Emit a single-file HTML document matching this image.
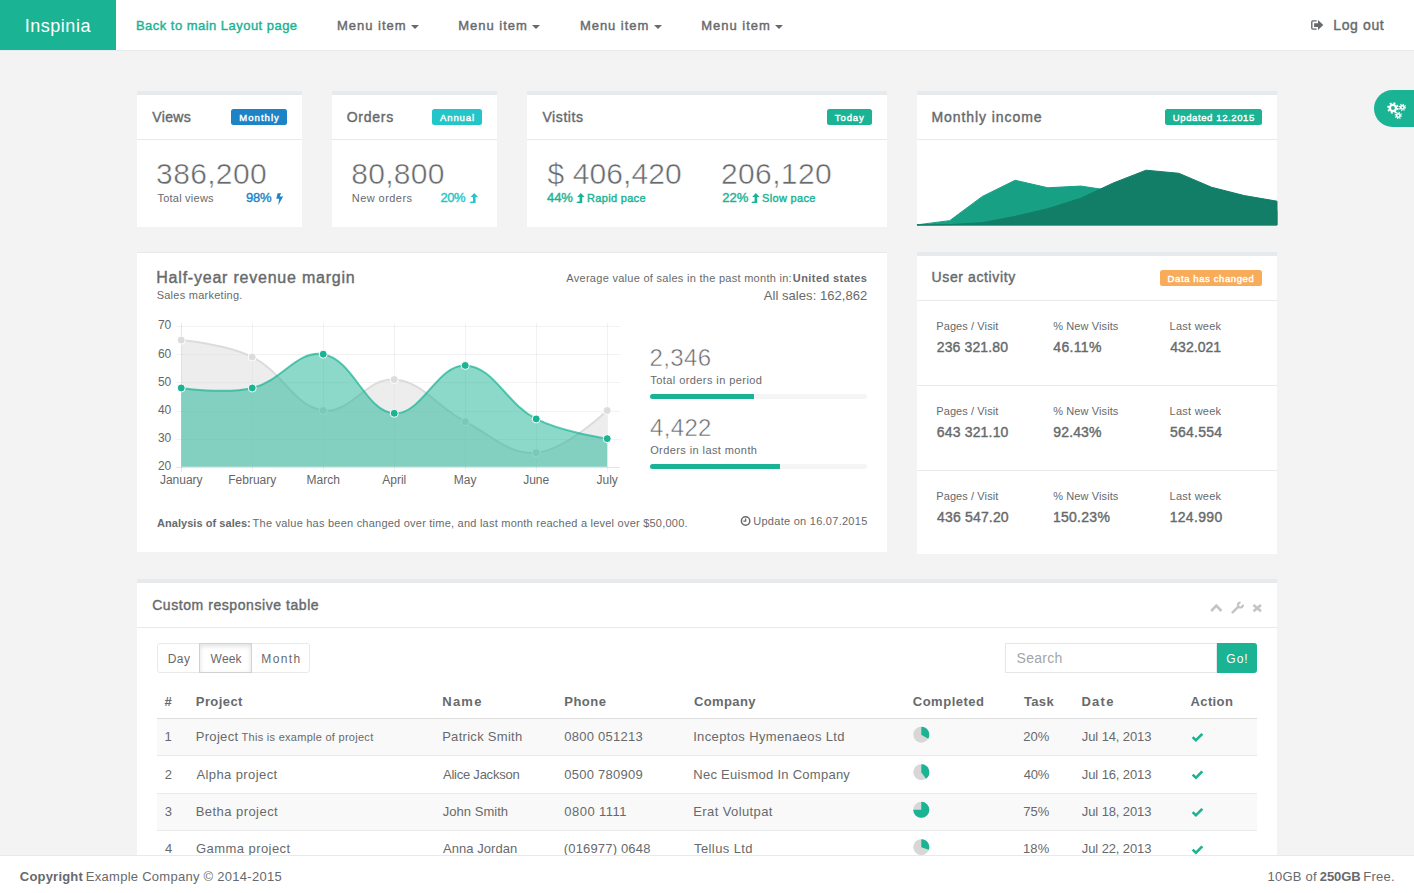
<!DOCTYPE html>
<html><head><meta charset="utf-8"><title>Inspinia</title><style>
html,body{margin:0;padding:0;}
body{width:1414px;height:893px;overflow:hidden;position:relative;background:#f3f3f4;font-family:"Liberation Sans",sans-serif;color:#676a6c;}
.r{position:absolute;}
.card{position:absolute;background:#fff;border-top:4px solid #e7eaec;box-sizing:border-box;}
.sep{position:absolute;left:0;right:0;height:1px;background:#e7eaec;}
.lbl{position:absolute;height:16px;border-radius:2.5px;}
.caret{position:absolute;top:24.5px;width:0;height:0;border-top:4px solid #676a6c;border-left:4px solid transparent;border-right:4px solid transparent;}
.prog{position:absolute;width:217px;height:5px;background:#f5f5f5;border-radius:3px;overflow:hidden;}
.prog div{height:5px;background:#1ab394;}
.ov{position:absolute;left:0;top:0;}
.t{position:absolute;white-space:nowrap;line-height:1;}
.lt{-webkit-text-stroke:0.5px #fff;}
.ft{z-index:6}
.foot{z-index:5;position:absolute;left:0;top:855px;width:1414px;height:38px;background:#fff;border-top:1px solid #e7eaec;box-sizing:border-box;}
</style></head>
<body>

<div class="r" style="left:0;top:0;width:1414px;height:50px;background:#fff;border-bottom:1px solid #e7eaec"></div>
<div class="r" style="left:0;top:0;width:116px;height:50px;background:#1ab394"></div>
<div class="caret" style="left:411px"></div>
<div class="caret" style="left:532px"></div>
<div class="caret" style="left:654px"></div>
<div class="caret" style="left:775px"></div>
<!-- row1 cards -->
<div class="card" style="left:137px;top:91px;width:165px;height:136px"><div class="sep" style="top:44px"></div></div>
<div class="card" style="left:332px;top:91px;width:165px;height:136px"><div class="sep" style="top:44px"></div></div>
<div class="card" style="left:527px;top:91px;width:360px;height:136px"><div class="sep" style="top:44px"></div></div>
<div class="card" style="left:917px;top:91px;width:360px;height:135px"><div class="sep" style="top:44px"></div></div>
<div class="lbl" style="left:231px;top:109px;width:56px;background:#1c84c6"></div>
<div class="lbl" style="left:432px;top:109px;width:50px;background:#23c6c8"></div>
<div class="lbl" style="left:827px;top:109px;width:45px;background:#1ab394"></div>
<div class="lbl" style="left:1165px;top:109px;width:97px;background:#1ab394"></div>
<!-- row2 -->
<div class="r" style="left:137px;top:252px;width:750px;height:300px;background:#fff;border-top:1px solid #e7eaec;box-sizing:border-box"></div>
<div class="card" style="left:917px;top:252px;width:360px;height:302px">
 <div class="sep" style="top:44px"></div><div class="sep" style="top:129px"></div><div class="sep" style="top:214px"></div></div>
<div class="lbl" style="left:1160px;top:270px;width:102px;background:#f8ac59"></div>
<div class="prog" style="left:650px;top:394px"><div style="width:104px"></div></div>
<div class="prog" style="left:650px;top:464px"><div style="width:130px"></div></div>
<!-- table card -->
<div class="card" style="left:137px;top:579px;width:1140px;height:320px"><div class="sep" style="top:44px"></div></div>
<div class="r" style="left:157px;top:643px;width:153px;height:30px;border:1px solid #e7eaec;border-radius:3px;box-sizing:border-box;background:#fff"></div>
<div class="r" style="left:199px;top:643px;width:53px;height:30px;border:1px solid #d2d2d2;box-sizing:border-box;background:#fff;box-shadow:inset 0 2px 5px rgba(0,0,0,.13)"></div>
<div class="r" style="left:1005px;top:643px;width:212px;height:30px;border:1px solid #e5e6e7;box-sizing:border-box;background:#fff"></div>
<div class="r" style="left:1217px;top:643px;width:40px;height:30px;border-radius:0 3px 3px 0;background:#1ab394"></div>
<div class="r" style="left:157px;top:718px;width:1100px;height:1px;background:#dddddd"></div>
<div class="r" style="left:157px;top:719px;width:1100px;height:36.5px;background:#f9f9f9"></div>
<div class="r" style="left:157px;top:755px;width:1100px;height:1px;background:#e7eaec"></div>
<div class="r" style="left:157px;top:793px;width:1100px;height:1px;background:#e7eaec"></div>
<div class="r" style="left:157px;top:794px;width:1100px;height:36.5px;background:#f9f9f9"></div>
<div class="r" style="left:157px;top:830px;width:1100px;height:1px;background:#e7eaec"></div>
<!-- settings tab -->
<div class="r" style="left:1374px;top:90px;width:40px;height:37px;background:#1ab394;border-radius:19px 0 0 19px"></div>


<svg class="ov" width="1414" height="893" viewBox="0 0 1414 893" font-family="Liberation Sans, sans-serif">
<!-- logout icon -->
<path d="M1316.6,20.9 H1312.8 Q1311.8,20.9 1311.8,21.9 V28.1 Q1311.8,29.1 1312.8,29.1 H1316.6" fill="none" stroke="#676a6c" stroke-width="1.4"/>
<path d="M1314.1,23.3 H1318 V20 L1323.3,25 L1318,30 V26.9 H1314.1 Z" fill="#676a6c"/>
<!-- bolt -->
<path d="M277.6,193.2 L281.2,193.2 L279.6,196.4 L283.1,196.4 L278.2,205.2 L279.2,198.8 L276.3,198.8 Z" fill="#1c84c6"/>
<!-- level-up icons -->
<defs><g id="lvl"><path d="M0,4 L3.6,0 L7.4,4 L5,4 L5,10 L-1,10 L0.4,8.4 L2.4,8.4 L2.4,4 Z" fill="currentColor"/></g></defs>
<use href="#lvl" x="470.6" y="193.1" style="color:#23c6c8"/>
<use href="#lvl" x="577.2" y="193.1" style="color:#1ab394"/>
<use href="#lvl" x="752.2" y="193.1" style="color:#1ab394"/>
<path d="M917.00,224.89 L949.73,220.63 L982.45,196.38 L1015.18,180.27 L1047.91,187.78 L1080.64,186.07 L1113.36,190.99 L1146.09,191.08 L1178.82,195.59 L1211.55,207.95 L1244.27,210.14 L1277.00,210.53 L1277,225.0 L917,225.0 Z" fill="#17a084" stroke="#17a084" stroke-width="1" stroke-linejoin="round"/>
<path d="M917.00,224.89 L949.73,224.62 L982.45,222.66 L1015.18,216.35 L1047.91,208.65 L1080.64,198.31 L1113.36,182.95 L1146.09,170.20 L1178.82,173.27 L1211.55,187.22 L1244.27,195.59 L1277.00,201.18 L1277,225.0 L917,225.0 Z" fill="#127e68" stroke="#127e68" stroke-width="1" stroke-linejoin="round"/>
<line x1="176.25" y1="467.50" x2="620" y2="467.50" stroke="rgba(0,0,0,.1)" stroke-width="1"/>
<text x="171.25" y="470.10" text-anchor="end" font-size="12" fill="#666">20</text>
<line x1="176.25" y1="439.50" x2="620" y2="439.50" stroke="rgba(0,0,0,.05)" stroke-width="1"/>
<text x="171.25" y="441.95" text-anchor="end" font-size="12" fill="#666">30</text>
<line x1="176.25" y1="411.50" x2="620" y2="411.50" stroke="rgba(0,0,0,.05)" stroke-width="1"/>
<text x="171.25" y="413.80" text-anchor="end" font-size="12" fill="#666">40</text>
<line x1="176.25" y1="382.50" x2="620" y2="382.50" stroke="rgba(0,0,0,.05)" stroke-width="1"/>
<text x="171.25" y="385.65" text-anchor="end" font-size="12" fill="#666">50</text>
<line x1="176.25" y1="354.50" x2="620" y2="354.50" stroke="rgba(0,0,0,.05)" stroke-width="1"/>
<text x="171.25" y="357.50" text-anchor="end" font-size="12" fill="#666">60</text>
<line x1="176.25" y1="326.50" x2="620" y2="326.50" stroke="rgba(0,0,0,.05)" stroke-width="1"/>
<text x="171.25" y="329.35" text-anchor="end" font-size="12" fill="#666">70</text>
<line x1="181.50" y1="323.05" x2="181.50" y2="471.80" stroke="rgba(0,0,0,.1)" stroke-width="1"/>
<text x="181.25" y="484" text-anchor="middle" font-size="12" fill="#666">January</text>
<line x1="252.50" y1="323.05" x2="252.50" y2="471.80" stroke="rgba(0,0,0,.05)" stroke-width="1"/>
<text x="252.24" y="484" text-anchor="middle" font-size="12" fill="#666">February</text>
<line x1="323.50" y1="323.05" x2="323.50" y2="471.80" stroke="rgba(0,0,0,.05)" stroke-width="1"/>
<text x="323.23" y="484" text-anchor="middle" font-size="12" fill="#666">March</text>
<line x1="394.50" y1="323.05" x2="394.50" y2="471.80" stroke="rgba(0,0,0,.05)" stroke-width="1"/>
<text x="394.22" y="484" text-anchor="middle" font-size="12" fill="#666">April</text>
<line x1="465.50" y1="323.05" x2="465.50" y2="471.80" stroke="rgba(0,0,0,.05)" stroke-width="1"/>
<text x="465.21" y="484" text-anchor="middle" font-size="12" fill="#666">May</text>
<line x1="536.50" y1="323.05" x2="536.50" y2="471.80" stroke="rgba(0,0,0,.05)" stroke-width="1"/>
<text x="536.20" y="484" text-anchor="middle" font-size="12" fill="#666">June</text>
<line x1="607.50" y1="323.05" x2="607.50" y2="471.80" stroke="rgba(0,0,0,.05)" stroke-width="1"/>
<text x="607.19" y="484" text-anchor="middle" font-size="12" fill="#666">July</text>
<path d="M181.25,340.12 C181.25,340.12 226.64,344.32 252.24,357.01 C283.43,372.47 292.88,405.69 323.23,410.50 C349.67,414.69 366.74,377.36 394.22,379.54 C423.53,381.86 435.90,406.65 465.21,421.76 C492.69,435.93 508.72,454.90 536.20,452.73 C565.51,450.40 607.19,410.50 607.19,410.50" fill="none" stroke="rgba(220,220,220,1)" stroke-width="2"/>
<path d="M181.25,340.12 C181.25,340.12 226.64,344.32 252.24,357.01 C283.43,372.47 292.88,405.69 323.23,410.50 C349.67,414.69 366.74,377.36 394.22,379.54 C423.53,381.86 435.90,406.65 465.21,421.76 C492.69,435.93 508.72,454.90 536.20,452.73 C565.51,450.40 607.19,410.50 607.19,410.50 L607.19,466.80 L181.25,466.80 Z" fill="rgba(220,220,220,0.5)" stroke="none"/>
<circle cx="181.25" cy="340.12" r="4" fill="rgba(220,220,220,1)" stroke="#fff" stroke-width="1"/>
<circle cx="252.24" cy="357.01" r="4" fill="rgba(220,220,220,1)" stroke="#fff" stroke-width="1"/>
<circle cx="323.23" cy="410.50" r="4" fill="rgba(220,220,220,1)" stroke="#fff" stroke-width="1"/>
<circle cx="394.22" cy="379.54" r="4" fill="rgba(220,220,220,1)" stroke="#fff" stroke-width="1"/>
<circle cx="465.21" cy="421.76" r="4" fill="rgba(220,220,220,1)" stroke="#fff" stroke-width="1"/>
<circle cx="536.20" cy="452.73" r="4" fill="rgba(220,220,220,1)" stroke="#fff" stroke-width="1"/>
<circle cx="607.19" cy="410.50" r="4" fill="rgba(220,220,220,1)" stroke="#fff" stroke-width="1"/>
<path d="M181.25,387.98 C181.25,387.98 225.29,394.39 252.24,387.98 C282.08,380.88 297.12,349.54 323.23,354.20 C353.91,359.67 364.74,410.98 394.22,413.31 C421.54,415.48 437.35,364.36 465.21,365.46 C494.14,366.61 505.15,402.94 536.20,418.94 C561.94,432.21 607.19,438.65 607.19,438.65" fill="none" stroke="rgba(26,179,148,0.7)" stroke-width="2"/>
<path d="M181.25,387.98 C181.25,387.98 225.29,394.39 252.24,387.98 C282.08,380.88 297.12,349.54 323.23,354.20 C353.91,359.67 364.74,410.98 394.22,413.31 C421.54,415.48 437.35,364.36 465.21,365.46 C494.14,366.61 505.15,402.94 536.20,418.94 C561.94,432.21 607.19,438.65 607.19,438.65 L607.19,466.80 L181.25,466.80 Z" fill="rgba(26,179,148,0.5)" stroke="none"/>
<circle cx="181.25" cy="387.98" r="4" fill="rgba(26,179,148,1)" stroke="#fff" stroke-width="1"/>
<circle cx="252.24" cy="387.98" r="4" fill="rgba(26,179,148,1)" stroke="#fff" stroke-width="1"/>
<circle cx="323.23" cy="354.20" r="4" fill="rgba(26,179,148,1)" stroke="#fff" stroke-width="1"/>
<circle cx="394.22" cy="413.31" r="4" fill="rgba(26,179,148,1)" stroke="#fff" stroke-width="1"/>
<circle cx="465.21" cy="365.46" r="4" fill="rgba(26,179,148,1)" stroke="#fff" stroke-width="1"/>
<circle cx="536.20" cy="418.94" r="4" fill="rgba(26,179,148,1)" stroke="#fff" stroke-width="1"/>
<circle cx="607.19" cy="438.65" r="4" fill="rgba(26,179,148,1)" stroke="#fff" stroke-width="1"/>
<!-- clock -->
<circle cx="745.6" cy="521" r="4.2" fill="none" stroke="#676a6c" stroke-width="1.5"/>
<path d="M745.6,518.4 v2.8 h-2.2" fill="none" stroke="#676a6c" stroke-width="1.3"/>
<!-- tools -->
<path d="M1211.2,611 L1216.3,605.6 L1221.4,611" fill="none" stroke="#c4c4c4" stroke-width="2.6"/>
<path d="M1232.6,612.4 L1238.4,606.6" stroke="#c4c4c4" stroke-width="2.4" stroke-linecap="round"/>
<path d="M1242.9,604.6 A2.5,2.5 0 1 1 1240.6,602.5" fill="none" stroke="#c4c4c4" stroke-width="2.2"/>
<path d="M1253.5,605 L1261,611.2 M1261,605 L1253.5,611.2" stroke="#c4c4c4" stroke-width="2.6"/>
<!-- pies -->
<circle cx="921.3" cy="734.7" r="8" fill="#d7d7d7"/>
<path d="M921.3,734.7 L921.3,726.7 A8,8 0 0 1 928.24,738.69 Z" fill="#1ab394"/>
<circle cx="921.3" cy="772.2" r="8" fill="#d7d7d7"/>
<path d="M921.3,772.2 L921.3,764.2 A8,8 0 0 1 926.00,778.67 Z" fill="#1ab394"/>
<circle cx="921.3" cy="809.8" r="8" fill="#d7d7d7"/>
<path d="M921.3,809.8 L921.3,801.8 A8,8 0 1 1 913.30,809.80 Z" fill="#1ab394"/>
<circle cx="921.3" cy="847.2" r="8" fill="#d7d7d7"/>
<path d="M921.3,847.2 L921.3,839.2 A8,8 0 0 1 928.91,849.67 Z" fill="#1ab394"/>
<!-- checks -->
<path transform="translate(1191.7,732.8)" d="M0,5.2 L1.9,3.4 L4.2,5.6 L9.6,0.2 L11.6,2.0 L4.2,9.3 Z" fill="#1ab394"/>
<path transform="translate(1191.7,770.3)" d="M0,5.2 L1.9,3.4 L4.2,5.6 L9.6,0.2 L11.6,2.0 L4.2,9.3 Z" fill="#1ab394"/>
<path transform="translate(1191.7,807.8)" d="M0,5.2 L1.9,3.4 L4.2,5.6 L9.6,0.2 L11.6,2.0 L4.2,9.3 Z" fill="#1ab394"/>
<path transform="translate(1191.7,845.3)" d="M0,5.2 L1.9,3.4 L4.2,5.6 L9.6,0.2 L11.6,2.0 L4.2,9.3 Z" fill="#1ab394"/>
<!-- gears -->
<g fill="#fff" stroke="none">
 <circle cx="1392.9" cy="108" r="4.3"/>
 <circle cx="1392.9" cy="108" r="4.9" fill="none" stroke="#fff" stroke-width="1.8" stroke-dasharray="1.9 1.95"/>
 <circle cx="1392.9" cy="108" r="1.9" fill="#1ab394"/>
 <circle cx="1402.4" cy="107.3" r="2.5"/>
 <circle cx="1402.4" cy="107.3" r="3.0" fill="none" stroke="#fff" stroke-width="1.3" stroke-dasharray="1.1 1.25"/>
 <circle cx="1402.4" cy="107.3" r="0.9" fill="#1ab394"/>
 <circle cx="1398.3" cy="115.5" r="2.5"/>
 <circle cx="1398.3" cy="115.5" r="3.0" fill="none" stroke="#fff" stroke-width="1.3" stroke-dasharray="1.1 1.25"/>
 <circle cx="1398.3" cy="115.5" r="0.9" fill="#1ab394"/>
</g>
</svg>

<div id="logo" class="t" style="left:24.80px;top:16.81px;font-size:18px;letter-spacing:0.508px;color:#fff;">Inspinia</div>
<div id="nav0" class="t sb" style="left:135.98px;top:18.81px;font-size:13px;-webkit-text-stroke:0.4px #1ab394;letter-spacing:0.469px;color:#1ab394;">Back to main Layout page</div>
<div id="nav1" class="t sb" style="left:336.98px;top:18.81px;font-size:13px;-webkit-text-stroke:0.4px #676a6c;letter-spacing:0.993px;">Menu item</div>
<div id="nav2" class="t sb" style="left:458.21px;top:18.81px;font-size:13px;-webkit-text-stroke:0.4px #676a6c;letter-spacing:0.986px;">Menu item</div>
<div id="nav3" class="t sb" style="left:579.98px;top:18.81px;font-size:13px;-webkit-text-stroke:0.4px #676a6c;letter-spacing:0.945px;">Menu item</div>
<div id="nav4" class="t sb" style="left:701.21px;top:18.81px;font-size:13px;-webkit-text-stroke:0.4px #676a6c;letter-spacing:0.986px;">Menu item</div>
<div id="logout" class="t sb" style="left:1333.34px;top:17.82px;font-size:14px;-webkit-text-stroke:0.4px #676a6c;letter-spacing:0.610px;">Log out</div>
<div id="t_views" class="t sb" style="left:152.22px;top:110.21px;font-size:14px;-webkit-text-stroke:0.4px #676a6c;letter-spacing:0.366px;">Views</div>
<div id="t_orders" class="t sb" style="left:346.73px;top:110.21px;font-size:14px;-webkit-text-stroke:0.4px #676a6c;letter-spacing:0.744px;">Orders</div>
<div id="t_visits" class="t sb" style="left:542.41px;top:110.21px;font-size:14px;-webkit-text-stroke:0.4px #676a6c;letter-spacing:0.595px;">Vistits</div>
<div id="t_income" class="t sb" style="left:931.49px;top:110.21px;font-size:14px;-webkit-text-stroke:0.4px #676a6c;letter-spacing:0.923px;">Monthly income</div>
<div id="l_monthly" class="t sb" style="left:239.26px;top:112.91px;font-size:9.5px;-webkit-text-stroke:0.4px #fff;letter-spacing:1.055px;color:#fff;">Monthly</div>
<div id="l_annual" class="t sb" style="left:439.98px;top:112.91px;font-size:9.5px;-webkit-text-stroke:0.4px #fff;letter-spacing:0.906px;color:#fff;">Annual</div>
<div id="l_today" class="t sb" style="left:834.85px;top:112.91px;font-size:9.5px;-webkit-text-stroke:0.4px #fff;letter-spacing:0.884px;color:#fff;">Today</div>
<div id="l_updated" class="t sb" style="left:1172.87px;top:112.91px;font-size:9.5px;-webkit-text-stroke:0.4px #fff;letter-spacing:0.604px;color:#fff;">Updated 12.2015</div>
<div id="n_views" class="t lt" style="left:156.11px;top:159.01px;font-size:30px;letter-spacing:0.343px;">386,200</div>
<div id="n_orders" class="t lt" style="left:351.35px;top:159.01px;font-size:30px;letter-spacing:0.256px;">80,800</div>
<div id="n_visits1" class="t lt" style="left:547.59px;top:158.51px;font-size:30px;letter-spacing:0.068px;">$ 406,420</div>
<div id="n_visits2" class="t lt" style="left:720.98px;top:158.51px;font-size:30px;letter-spacing:0.373px;">206,120</div>
<div id="s_views" class="t" style="left:157.40px;top:192.60px;font-size:11px;letter-spacing:0.239px;">Total views</div>
<div id="s_orders" class="t" style="left:351.75px;top:192.60px;font-size:11px;letter-spacing:0.452px;">New orders</div>
<div id="p_views" class="t sb" style="left:245.94px;top:191.00px;font-size:13px;-webkit-text-stroke:0.4px #1c84c6;letter-spacing:-0.145px;color:#1c84c6;">98%</div>
<div id="p_orders" class="t sb" style="left:440.39px;top:191.00px;font-size:13px;-webkit-text-stroke:0.4px #23c6c8;letter-spacing:-0.378px;color:#23c6c8;">20%</div>
<div id="p_v1" class="t sb" style="left:546.93px;top:191.00px;font-size:13px;-webkit-text-stroke:0.4px #1ab394;letter-spacing:-0.014px;color:#1ab394;">44%</div>
<div id="p_v1b" class="t sb" style="left:587.11px;top:193.00px;font-size:11px;-webkit-text-stroke:0.4px #1ab394;letter-spacing:0.306px;color:#1ab394;">Rapid pace</div>
<div id="p_v2" class="t sb" style="left:722.24px;top:191.00px;font-size:13px;-webkit-text-stroke:0.4px #1ab394;letter-spacing:-0.029px;color:#1ab394;">22%</div>
<div id="p_v2b" class="t sb" style="left:762.01px;top:193.00px;font-size:11px;-webkit-text-stroke:0.4px #1ab394;letter-spacing:0.332px;color:#1ab394;">Slow pace</div>
<div id="h_title" class="t sb" style="left:156.29px;top:270.00px;font-size:16px;-webkit-text-stroke:0.4px #676a6c;letter-spacing:0.780px;">Half-year revenue margin</div>
<div id="h_sub" class="t" style="left:156.63px;top:289.91px;font-size:11px;letter-spacing:0.258px;">Sales marketing.</div>
<div id="h_avg" class="t" style="left:566.31px;top:273.10px;font-size:11px;letter-spacing:0.283px;">Average value of sales in the past month in:</div>
<div id="h_us" class="t" style="left:792.82px;top:273.10px;font-size:11px;font-weight:700;letter-spacing:0.425px;">United states</div>
<div id="h_all" class="t" style="left:763.76px;top:288.60px;font-size:13px;letter-spacing:0.053px;">All sales: 162,862</div>
<div id="h_n1" class="t lt" style="left:649.52px;top:346.10px;font-size:24px;letter-spacing:0.351px;">2,346</div>
<div id="h_s1" class="t" style="left:650.34px;top:375.21px;font-size:11px;letter-spacing:0.422px;">Total orders in period</div>
<div id="h_n2" class="t lt" style="left:650.02px;top:416.01px;font-size:24px;letter-spacing:0.333px;">4,422</div>
<div id="h_s2" class="t" style="left:650.16px;top:445.10px;font-size:11px;letter-spacing:0.409px;">Orders in last month</div>
<div id="h_an" class="t" style="left:156.98px;top:517.91px;font-size:11px;font-weight:700;letter-spacing:0.052px;">Analysis of sales:</div>
<div id="h_an2" class="t" style="left:252.61px;top:517.91px;font-size:11px;letter-spacing:0.229px;">The value has been changed over time, and last month reached a level over $50,000.</div>
<div id="h_upd" class="t" style="left:753.28px;top:515.71px;font-size:11px;letter-spacing:0.269px;">Update on 16.07.2015</div>
<div id="u_title" class="t sb" style="left:931.55px;top:269.82px;font-size:14px;-webkit-text-stroke:0.4px #676a6c;letter-spacing:0.613px;">User activity</div>
<div id="l_data" class="t sb" style="left:1167.62px;top:273.71px;font-size:9.5px;-webkit-text-stroke:0.4px #fff;letter-spacing:0.599px;color:#fff;">Data has changed</div>
<div id="tb_title" class="t sb" style="left:152.18px;top:597.81px;font-size:14px;-webkit-text-stroke:0.4px #676a6c;letter-spacing:0.561px;">Custom responsive table</div>
<div id="b_day" class="t" style="left:167.63px;top:652.91px;font-size:12px;letter-spacing:0.476px;">Day</div>
<div id="b_week" class="t" style="left:210.62px;top:652.91px;font-size:12px;letter-spacing:0.157px;">Week</div>
<div id="b_month" class="t" style="left:261.32px;top:652.91px;font-size:12px;letter-spacing:1.368px;">Month</div>
<div id="search" class="t" style="left:1016.62px;top:651.32px;font-size:14px;letter-spacing:0.275px;color:#a4a6a8;">Search</div>
<div id="go" class="t" style="left:1226.36px;top:653.01px;font-size:12px;letter-spacing:0.986px;color:#fff;">Go!</div>
<div id="f_copy" class="t ft" style="left:19.81px;top:870.00px;font-size:13px;font-weight:700;letter-spacing:0.206px;">Copyright</div>
<div id="f_copy2" class="t ft" style="left:85.82px;top:870.00px;font-size:13px;letter-spacing:0.272px;">Example Company © 2014-2015</div>
<div id="f_r1" class="t ft" style="left:1267.61px;top:870.10px;font-size:13px;letter-spacing:0.204px;">10GB of</div>
<div id="f_r2" class="t ft" style="left:1319.76px;top:870.10px;font-size:13px;font-weight:700;letter-spacing:-0.059px;">250GB</div>
<div id="f_r3" class="t ft" style="left:1363.16px;top:870.10px;font-size:13px;letter-spacing:0.289px;">Free.</div>
<div id="ua_l00" class="t" style="left:936.28px;top:321.31px;font-size:11px;letter-spacing:0.092px;">Pages / Visit</div>
<div id="ua_v00" class="t sb" style="left:936.71px;top:339.91px;font-size:14px;-webkit-text-stroke:0.4px #676a6c;letter-spacing:0.139px;">236 321.80</div>
<div id="ua_l01" class="t" style="left:1053.28px;top:321.31px;font-size:11px;letter-spacing:0.102px;">% New Visits</div>
<div id="ua_v01" class="t sb" style="left:1053.28px;top:339.91px;font-size:14px;-webkit-text-stroke:0.4px #676a6c;letter-spacing:0.342px;">46.11%</div>
<div id="ua_l02" class="t" style="left:1169.55px;top:321.31px;font-size:11px;letter-spacing:0.250px;">Last week</div>
<div id="ua_v02" class="t sb" style="left:1170.30px;top:339.91px;font-size:14px;-webkit-text-stroke:0.4px #676a6c;letter-spacing:0.028px;">432.021</div>
<div id="ua_l10" class="t" style="left:936.28px;top:406.31px;font-size:11px;letter-spacing:0.092px;">Pages / Visit</div>
<div id="ua_v10" class="t sb" style="left:936.72px;top:424.91px;font-size:14px;-webkit-text-stroke:0.4px #676a6c;letter-spacing:0.179px;">643 321.10</div>
<div id="ua_l11" class="t" style="left:1053.28px;top:406.31px;font-size:11px;letter-spacing:0.102px;">% New Visits</div>
<div id="ua_v11" class="t sb" style="left:1053.27px;top:424.91px;font-size:14px;-webkit-text-stroke:0.4px #676a6c;letter-spacing:0.147px;">92.43%</div>
<div id="ua_l12" class="t" style="left:1169.55px;top:406.31px;font-size:11px;letter-spacing:0.250px;">Last week</div>
<div id="ua_v12" class="t sb" style="left:1169.92px;top:424.91px;font-size:14px;-webkit-text-stroke:0.4px #676a6c;letter-spacing:0.244px;">564.554</div>
<div id="ua_l20" class="t" style="left:936.28px;top:491.31px;font-size:11px;letter-spacing:0.092px;">Pages / Visit</div>
<div id="ua_v20" class="t sb" style="left:937.05px;top:509.91px;font-size:14px;-webkit-text-stroke:0.4px #676a6c;letter-spacing:0.169px;">436 547.20</div>
<div id="ua_l21" class="t" style="left:1053.28px;top:491.31px;font-size:11px;letter-spacing:0.102px;">% New Visits</div>
<div id="ua_v21" class="t sb" style="left:1052.91px;top:509.91px;font-size:14px;-webkit-text-stroke:0.4px #676a6c;letter-spacing:0.278px;">150.23%</div>
<div id="ua_l22" class="t" style="left:1169.55px;top:491.31px;font-size:11px;letter-spacing:0.250px;">Last week</div>
<div id="ua_v22" class="t sb" style="left:1169.63px;top:509.91px;font-size:14px;-webkit-text-stroke:0.4px #676a6c;letter-spacing:0.323px;">124.990</div>
<div id="th0" class="t" style="left:164.50px;top:695.22px;font-size:13px;font-weight:700;">#</div>
<div id="th1" class="t" style="left:195.81px;top:695.22px;font-size:13px;font-weight:700;letter-spacing:0.423px;">Project</div>
<div id="th2" class="t" style="left:442.27px;top:695.22px;font-size:13px;font-weight:700;letter-spacing:1.231px;">Name</div>
<div id="th3" class="t" style="left:564.21px;top:695.22px;font-size:13px;font-weight:700;letter-spacing:0.502px;">Phone</div>
<div id="th4" class="t" style="left:693.95px;top:695.22px;font-size:13px;font-weight:700;letter-spacing:0.380px;">Company</div>
<div id="th5" class="t" style="left:912.77px;top:695.22px;font-size:13px;font-weight:700;letter-spacing:0.514px;">Completed</div>
<div id="th6" class="t" style="left:1023.88px;top:695.22px;font-size:13px;font-weight:700;letter-spacing:0.356px;">Task</div>
<div id="th7" class="t" style="left:1081.40px;top:695.22px;font-size:13px;font-weight:700;letter-spacing:1.263px;">Date</div>
<div id="th8" class="t" style="left:1190.47px;top:695.22px;font-size:13px;font-weight:700;letter-spacing:0.398px;">Action</div>
<div id="r0_n" class="t" style="left:164.48px;top:730.00px;font-size:13px;">1</div>
<div id="r0_p" class="t" style="left:195.73px;top:730.00px;font-size:13px;letter-spacing:0.316px;">Project</div>
<div id="r0_name" class="t" style="left:442.16px;top:730.00px;font-size:13px;letter-spacing:0.291px;">Patrick Smith</div>
<div id="r0_ph" class="t" style="left:564.36px;top:730.00px;font-size:13px;letter-spacing:0.241px;">0800 051213</div>
<div id="r0_co" class="t" style="left:693.13px;top:730.00px;font-size:13px;letter-spacing:0.364px;">Inceptos Hymenaeos Ltd</div>
<div id="r0_t" class="t" style="left:1023.37px;top:730.00px;font-size:13px;">20%</div>
<div id="r0_d" class="t" style="left:1081.86px;top:730.00px;font-size:13px;letter-spacing:-0.113px;">Jul 14, 2013</div>
<div id="r1_n" class="t" style="left:164.76px;top:767.72px;font-size:13px;">2</div>
<div id="r1_p" class="t" style="left:196.41px;top:767.72px;font-size:13px;letter-spacing:0.408px;">Alpha project</div>
<div id="r1_name" class="t" style="left:442.96px;top:767.72px;font-size:13px;letter-spacing:-0.231px;">Alice Jackson</div>
<div id="r1_ph" class="t" style="left:564.36px;top:767.72px;font-size:13px;letter-spacing:0.238px;">0500 780909</div>
<div id="r1_co" class="t" style="left:693.30px;top:767.72px;font-size:13px;letter-spacing:0.265px;">Nec Euismod In Company</div>
<div id="r1_t" class="t" style="left:1023.63px;top:767.72px;font-size:13px;letter-spacing:-0.129px;">40%</div>
<div id="r1_d" class="t" style="left:1081.86px;top:767.72px;font-size:13px;letter-spacing:-0.113px;">Jul 16, 2013</div>
<div id="r2_n" class="t" style="left:164.63px;top:805.00px;font-size:13px;">3</div>
<div id="r2_p" class="t" style="left:195.73px;top:805.00px;font-size:13px;letter-spacing:0.447px;">Betha project</div>
<div id="r2_name" class="t" style="left:442.75px;top:805.00px;font-size:13px;letter-spacing:0.033px;">John Smith</div>
<div id="r2_ph" class="t" style="left:564.36px;top:805.00px;font-size:13px;letter-spacing:0.445px;">0800 1111</div>
<div id="r2_co" class="t" style="left:693.30px;top:805.00px;font-size:13px;letter-spacing:0.388px;">Erat Volutpat</div>
<div id="r2_t" class="t" style="left:1023.37px;top:805.00px;font-size:13px;">75%</div>
<div id="r2_d" class="t" style="left:1081.86px;top:805.00px;font-size:13px;letter-spacing:-0.113px;">Jul 18, 2013</div>
<div id="r3_n" class="t" style="left:165.06px;top:841.72px;font-size:13px;">4</div>
<div id="r3_p" class="t" style="left:195.99px;top:841.72px;font-size:13px;letter-spacing:0.442px;">Gamma project</div>
<div id="r3_name" class="t" style="left:442.96px;top:841.72px;font-size:13px;letter-spacing:0.049px;">Anna Jordan</div>
<div id="r3_ph" class="t" style="left:563.78px;top:841.72px;font-size:13px;letter-spacing:0.169px;">(016977) 0648</div>
<div id="r3_co" class="t" style="left:694.06px;top:841.72px;font-size:13px;letter-spacing:0.397px;">Tellus Ltd</div>
<div id="r3_t" class="t" style="left:1022.90px;top:841.72px;font-size:13px;letter-spacing:0.235px;">18%</div>
<div id="r3_d" class="t" style="left:1081.86px;top:841.72px;font-size:13px;letter-spacing:-0.113px;">Jul 22, 2013</div>
<div id="r0_small" class="t" style="left:241.61px;top:732.00px;font-size:11px;letter-spacing:0.275px;">This is example of project</div>
<div class="foot"></div>

</body></html>
